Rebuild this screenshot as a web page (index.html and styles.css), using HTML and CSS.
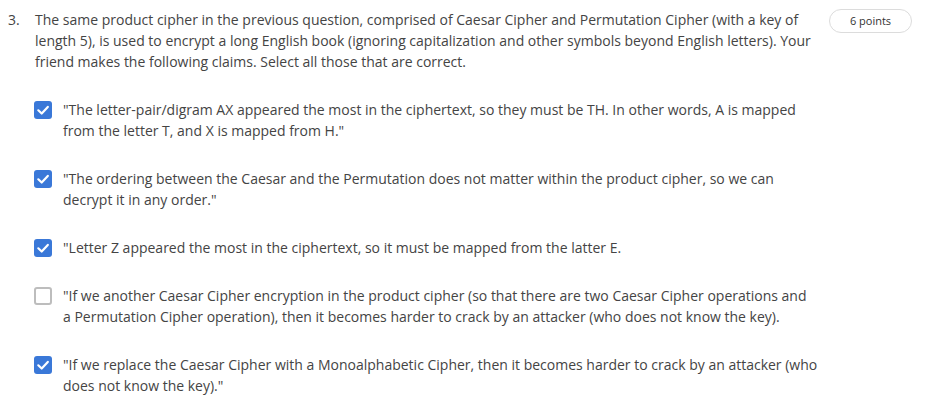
FILE: index.html
```html
<!DOCTYPE html>
<html>
<head>
<meta charset="utf-8">
<link rel="stylesheet" href="styles.css">
</head>
<body>
<div class="question">
  <div class="head">
    <span class="num">3.</span>
    <p class="prompt">The same product cipher in the previous question, comprised of Caesar Cipher and Permutation Cipher (with a key of length 5), is used to encrypt a long English book (ignoring capitalization and other symbols beyond English letters). Your friend makes the following claims. Select all those that are correct.</p>
    <span class="points">6 points</span>
  </div>
  <ul class="options">
    <li class="option"><span class="box checked"><svg viewBox="0 0 18 18" width="18" height="18"><path d="M4.3 9.3 L7.7 12.5 L13.8 5.9" fill="none" stroke="#fff" stroke-width="2.2" stroke-linecap="round" stroke-linejoin="round"/></svg></span><span class="label">"The letter-pair/digram AX appeared the most in the ciphertext, so they must be TH. In other words, A is mapped from the letter T, and X is mapped from H."</span></li>
    <li class="option"><span class="box checked"><svg viewBox="0 0 18 18" width="18" height="18"><path d="M4.3 9.3 L7.7 12.5 L13.8 5.9" fill="none" stroke="#fff" stroke-width="2.2" stroke-linecap="round" stroke-linejoin="round"/></svg></span><span class="label">"The ordering between the Caesar and the Permutation does not matter within the product cipher, so we can decrypt it in any order."</span></li>
    <li class="option"><span class="box checked"><svg viewBox="0 0 18 18" width="18" height="18"><path d="M4.3 9.3 L7.7 12.5 L13.8 5.9" fill="none" stroke="#fff" stroke-width="2.2" stroke-linecap="round" stroke-linejoin="round"/></svg></span><span class="label">"Letter Z appeared the most in the ciphertext, so it must be mapped from the latter E.</span></li>
    <li class="option"><span class="box"></span><span class="label">"If we another Caesar Cipher encryption in the product cipher (so that there are two Caesar Cipher operations and<br>a Permutation Cipher operation), then it becomes harder to crack by an attacker (who does not know the key).</span></li>
    <li class="option"><span class="box checked"><svg viewBox="0 0 18 18" width="18" height="18"><path d="M4.3 9.3 L7.7 12.5 L13.8 5.9" fill="none" stroke="#fff" stroke-width="2.2" stroke-linecap="round" stroke-linejoin="round"/></svg></span><span class="label">"If we replace the Caesar Cipher with a Monoalphabetic Cipher, then it becomes harder to crack by an attacker (who does not know the key)."</span></li>
  </ul>
</div>
</body>
</html>
```
FILE: styles.css
```css
html, body {
  margin: 0;
  padding: 0;
  background: #fff;
}
body {
  font-family: "Open Sans", "Liberation Sans", sans-serif;
  font-size: 14px;
  line-height: 21px;
  color: #444;
}
.question {
  padding: 9px 14px 0 8px;
}
.head {
  display: flex;
  align-items: flex-start;
}
.num {
  width: 27px;
  flex: none;
}
.prompt {
  margin: 0;
  width: 780px;
  flex: none;
}
.points {
  margin-left: auto;
  margin-top: 0;
  flex: none;
  width: 81px;
  height: 22px;
  border: 1px solid #dcdcdc;
  border-radius: 12px;
  font-size: 11px;
  line-height: 22px;
  text-align: center;
  color: #333;
}
.options {
  list-style: none;
  margin: 0;
  padding: 27px 0 0 26px;
}
.option {
  display: flex;
  align-items: flex-start;
  margin-bottom: 27px;
}
.box {
  flex: none;
  width: 18px;
  height: 18px;
  box-sizing: border-box;
  border: 2px solid #bdbdbd;
  border-radius: 3px;
  margin-top: 2px;
  margin-right: 11px;
  background: #fff;
}
.box.checked {
  background: #3a78d8;
  border: none;
}
.box svg {
  display: block;
}
.label {
  width: 758px;
}
```
